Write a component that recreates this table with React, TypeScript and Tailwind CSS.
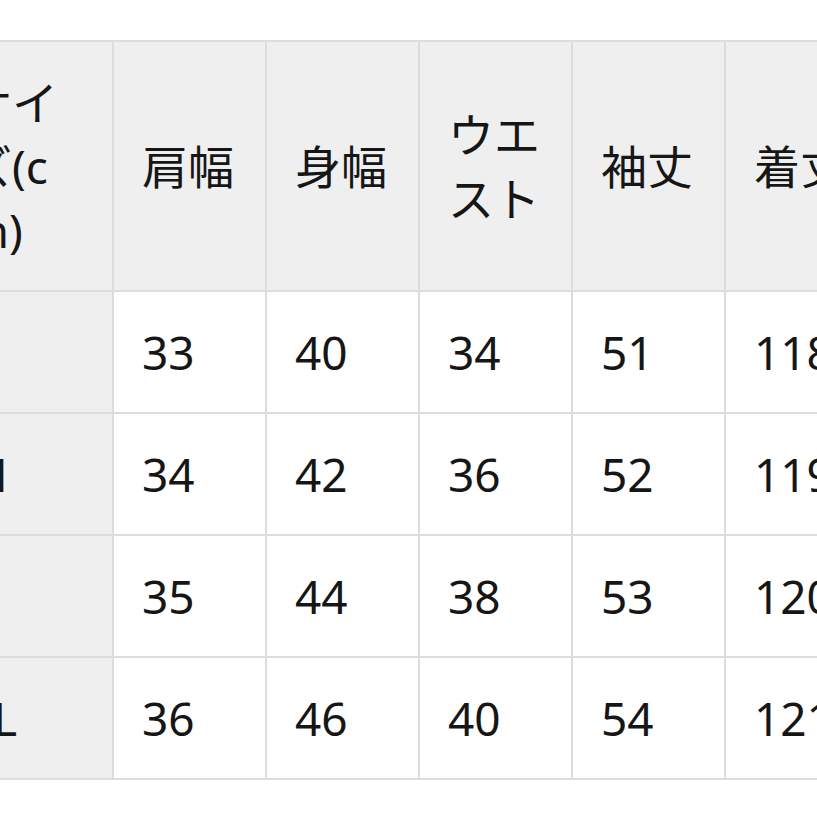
import { Fragment } from 'react';

const headers = ['サイズ(cm)', '肩幅', '身幅', 'ウエスト', '袖丈', '着丈'];

const rows = [
  { size: 'S', values: ['33', '40', '34', '51', '118'] },
  { size: 'M', values: ['34', '42', '36', '52', '119'] },
  { size: 'L', values: ['35', '44', '38', '53', '120'] },
  { size: 'XL', values: ['36', '46', '40', '54', '121'] },
];

export default function App() {
  return (
    <div
      className="w-full h-[817px] overflow-hidden bg-white pt-[40px] text-[#161616]"
      style={{ fontFamily: '"Noto Sans", "Noto Sans CJK JP", sans-serif' }}
    >
      {/* サイズ表 (横スクロール途中の状態) */}
      <div className="-ml-[64px] w-max grid grid-cols-[174px_repeat(5,151px)] gap-[2px] p-[2px] bg-[#dddddd] text-[46px] leading-[64px]">
        {headers.map((h) => (
          <div key={h} className="bg-[#efefef] h-[248px] px-[28px] flex items-center break-all">
            <span>{h}</span>
          </div>
        ))}

        {rows.map((row) => (
          <Fragment key={row.size}>
            <div className="bg-[#efefef] h-[120px] px-[28px] flex items-center">{row.size}</div>
            {row.values.map((v, i) => (
              <div key={i} className="bg-white h-[120px] px-[28px] flex items-center">
                {v}
              </div>
            ))}
          </Fragment>
        ))}
      </div>
    </div>
  );
}
